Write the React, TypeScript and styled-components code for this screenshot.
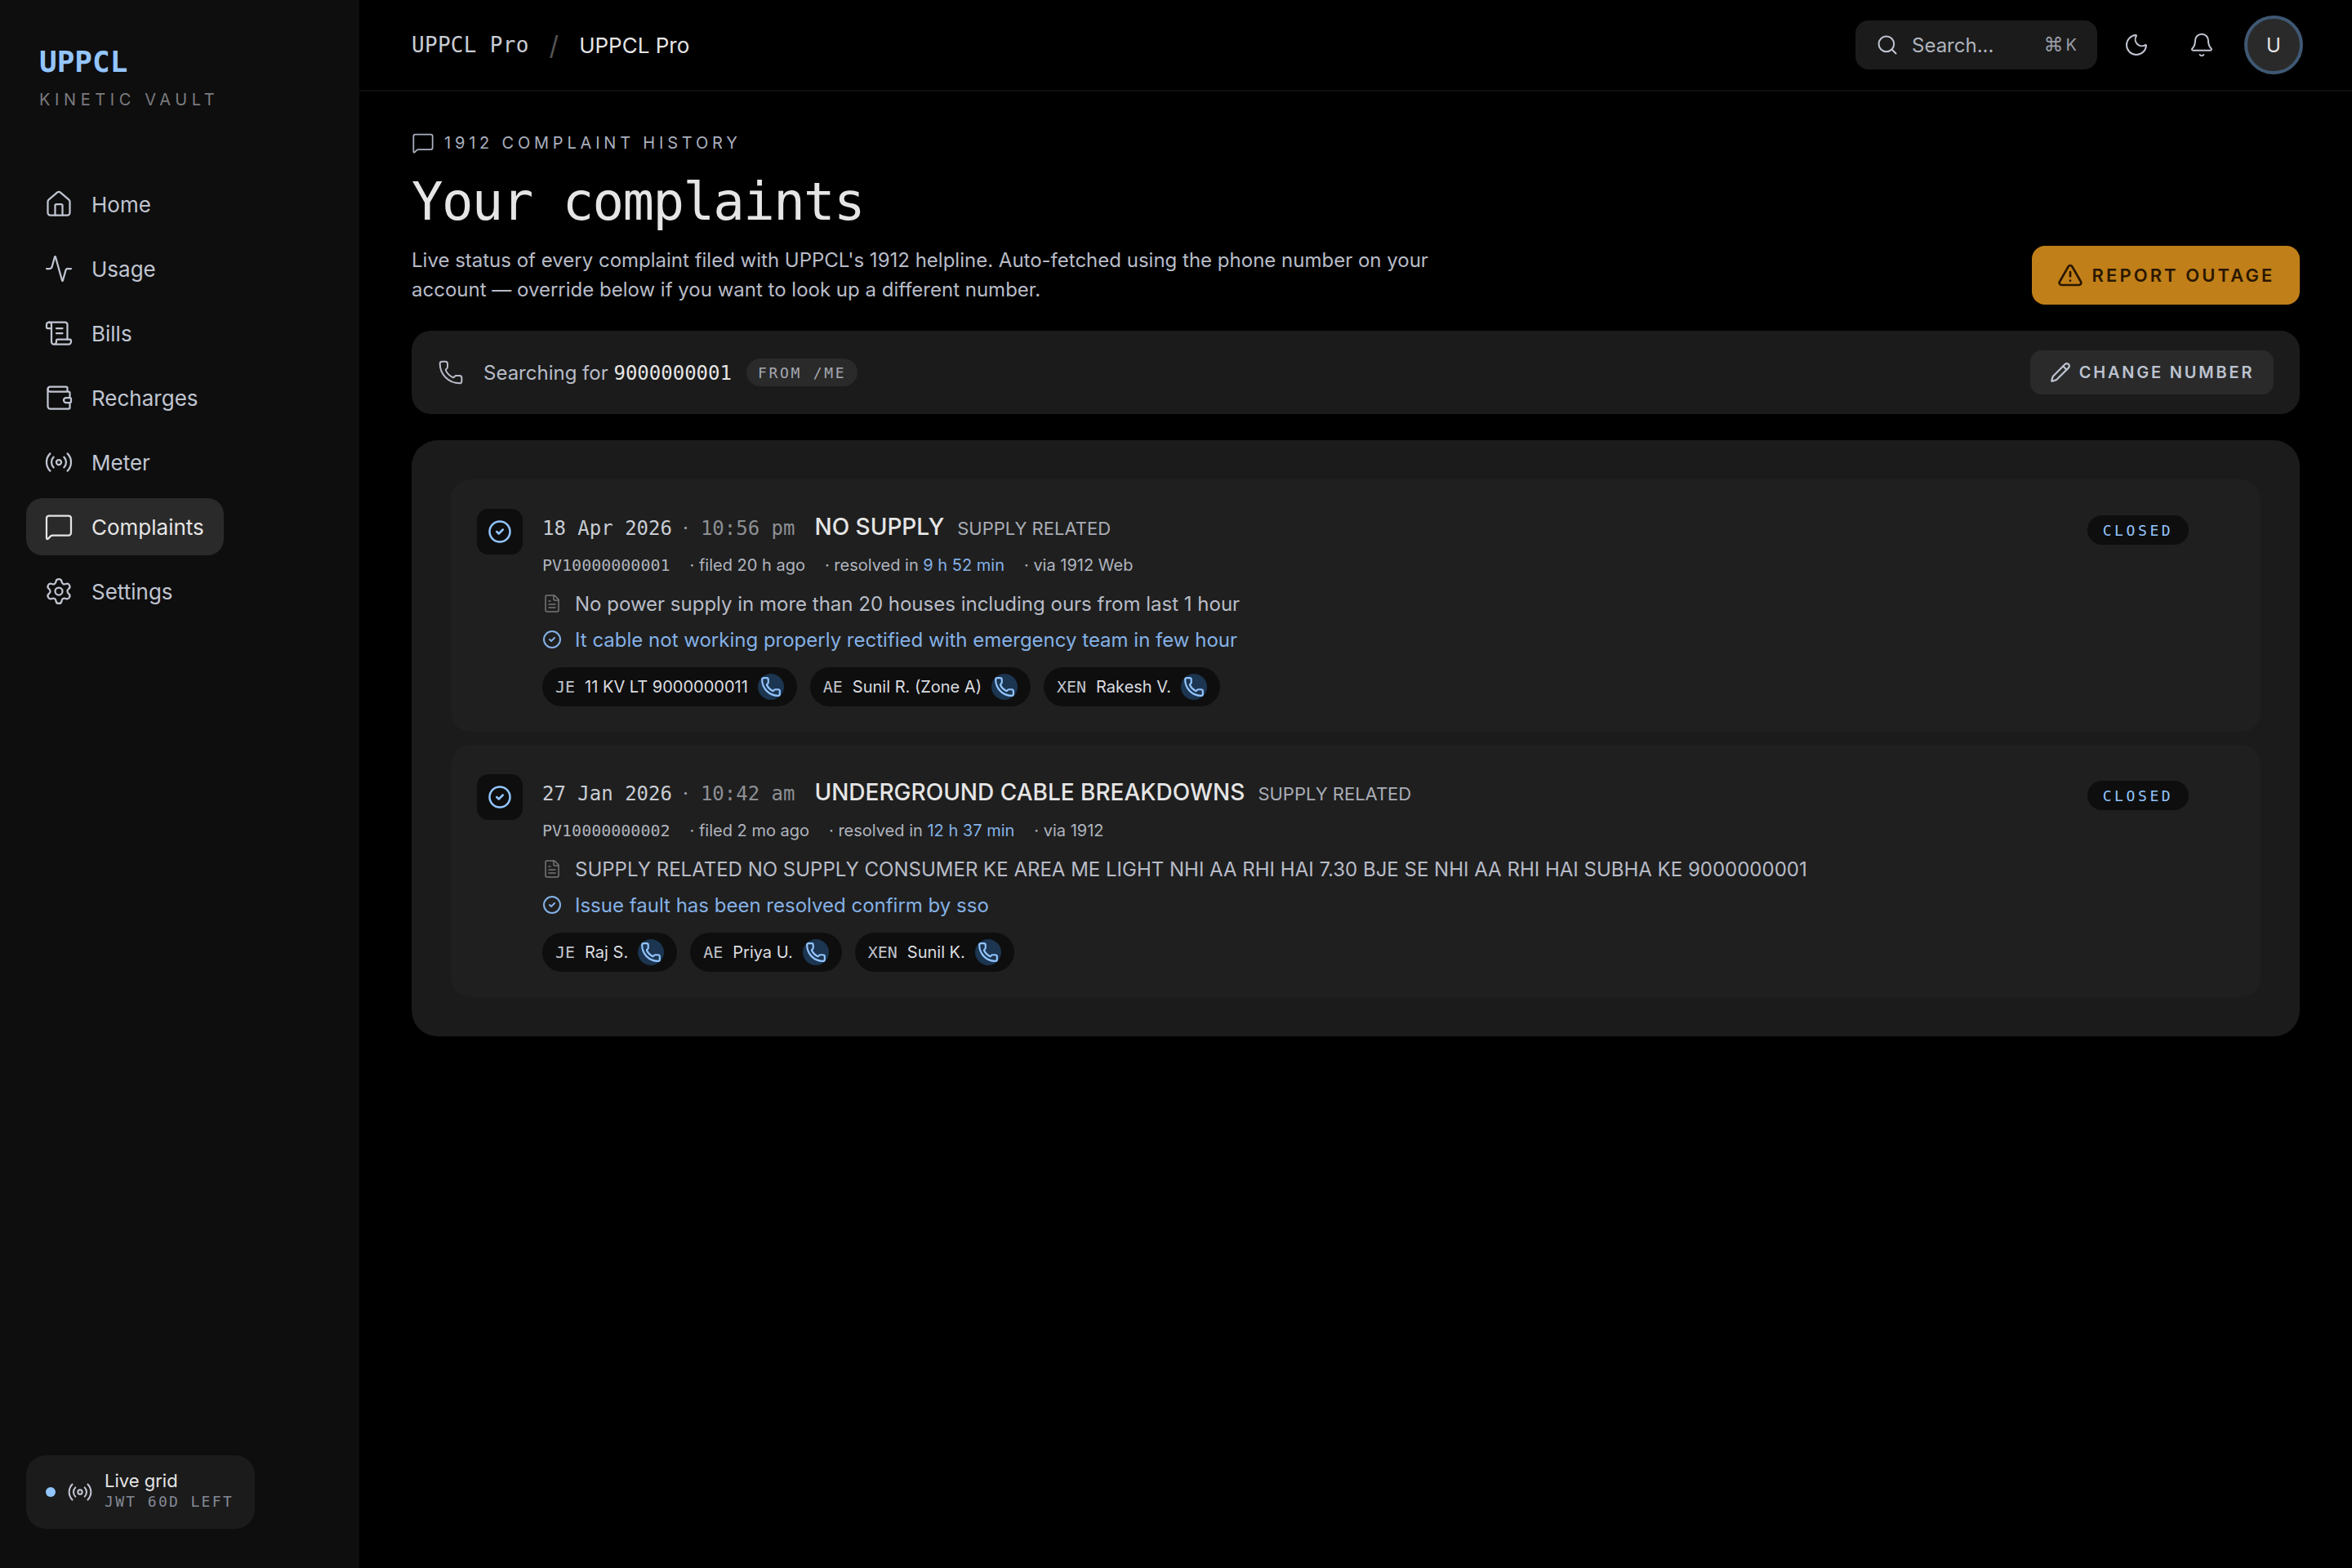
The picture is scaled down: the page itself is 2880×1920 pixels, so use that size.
import React from 'react';
import styled, { createGlobalStyle } from 'styled-components';
import {
	Activity,
	Bell,
	CircleCheck,
	FileText,
	House,
	MessageSquare,
	Moon,
	Pencil,
	Phone,
	Radio,
	ScrollText,
	Search,
	Settings,
	TriangleAlert,
	Wallet,
} from 'lucide-react';

const SANS = '"Inter", "Liberation Sans", sans-serif';
const MONO = '"DejaVu Sans Mono", "Liberation Mono", monospace';

const BLUE = '#93c5fd';
const SOFT_BLUE = '#84b1e6';

const GlobalStyle = createGlobalStyle`
	html, body {
		margin: 0;
		padding: 0;
		background: #000;
	}
	* {
		box-sizing: border-box;
	}
`;

const NAV_ITEMS = [
	{ label: 'Home', icon: House },
	{ label: 'Usage', icon: Activity },
	{ label: 'Bills', icon: ScrollText },
	{ label: 'Recharges', icon: Wallet },
	{ label: 'Meter', icon: Radio },
	{ label: 'Complaints', icon: MessageSquare, active: true },
	{ label: 'Settings', icon: Settings },
];

const COMPLAINTS = [
	{
		date: '18 Apr 2026',
		time: '10:56 pm',
		title: 'NO SUPPLY',
		category: 'SUPPLY RELATED',
		id: 'PV10000000001',
		filed: 'filed 20 h ago',
		resolved: '9 h 52 min',
		via: 'via 1912 Web',
		text: 'No power supply in more than 20 houses including ours from last 1 hour',
		resolution: 'It cable not working properly rectified with emergency team in few hour',
		contacts: [
			{ role: 'JE', name: '11 KV LT 9000000011' },
			{ role: 'AE', name: 'Sunil R. (Zone A)' },
			{ role: 'XEN', name: 'Rakesh V.' },
		],
	},
	{
		date: '27 Jan 2026',
		time: '10:42 am',
		title: 'UNDERGROUND CABLE BREAKDOWNS',
		category: 'SUPPLY RELATED',
		id: 'PV10000000002',
		filed: 'filed 2 mo ago',
		resolved: '12 h 37 min',
		via: 'via 1912',
		text: 'SUPPLY RELATED NO SUPPLY CONSUMER KE AREA ME LIGHT NHI AA RHI HAI 7.30 BJE SE NHI AA RHI HAI SUBHA KE 9000000001',
		resolution: 'Issue fault has been resolved confirm by sso',
		contacts: [
			{ role: 'JE', name: 'Raj S.' },
			{ role: 'AE', name: 'Priya U.' },
			{ role: 'XEN', name: 'Sunil K.' },
		],
	},
];

const App = () => {
	return (
		<Shell>
			<GlobalStyle />
			<Sidebar>
				<div>
					<Brand>
						<BrandName>UPPCL</BrandName>
						<BrandTag>Kinetic Vault</BrandTag>
					</Brand>
					<Nav>
						{NAV_ITEMS.map(({ label, icon: Icon, active }) => (
							<NavItem key={label} $active={!!active}>
								<Icon size={36} strokeWidth={1.5} />
								{label}
							</NavItem>
						))}
					</Nav>
				</div>
				<LiveCard>
					<LiveDot />
					<Radio size={32} strokeWidth={1.5} color="#c5cad5" />
					<LiveText>
						<LiveTitle>Live grid</LiveTitle>
						<LiveSub>JWT 60D LEFT</LiveSub>
					</LiveText>
				</LiveCard>
			</Sidebar>

			<Main>
				<TopBar>
					<Crumbs>
						<CrumbMono>UPPCL Pro</CrumbMono>
						<CrumbSlash>/</CrumbSlash>
						<CrumbPage>UPPCL Pro</CrumbPage>
					</Crumbs>
					<TopActions>
						<SearchBox>
							<Search size={28} strokeWidth={1.75} />
							<SearchText>Search...</SearchText>
							<Kbd>
								<KbdMark>⌘</KbdMark>K
							</Kbd>
						</SearchBox>
						<IconSlot>
							<Moon size={32} strokeWidth={1.5} />
						</IconSlot>
						<IconSlot>
							<Bell size={32} strokeWidth={1.5} />
						</IconSlot>
						<Avatar>U</Avatar>
					</TopActions>
				</TopBar>

				<Content>
					<PageHead>
						<div>
							<Eyebrow>
								<MessageSquare size={28} strokeWidth={1.5} />
								1912 Complaint History
							</Eyebrow>
							<PageTitle>Your complaints</PageTitle>
							<Lede>
								Live status of every complaint filed with UPPCL's 1912 helpline. Auto-fetched using the phone number on your account — override below if you want to look up a different number.
							</Lede>
						</div>
						<ReportButton>
							<TriangleAlert size={32} strokeWidth={2} />
							Report Outage
						</ReportButton>
					</PageHead>

					<SearchStrip>
						<StripLeft>
							<Phone size={32} strokeWidth={1.5} />
							<span>
								Searching for <StripNumber>9000000001</StripNumber>
							</span>
							<SourceChip>FROM /ME</SourceChip>
						</StripLeft>
						<ChangeButton>
							<Pencil size={26} strokeWidth={2} />
							Change Number
						</ChangeButton>
					</SearchStrip>

					<Panel>
						{COMPLAINTS.map((c) => (
							<Card key={c.id}>
								<StatusBox>
									<CircleCheck size={30} strokeWidth={2} />
								</StatusBox>
								<CardBody>
									<TitleRow>
										<DateText>{c.date}</DateText>
										<DateDot>·</DateDot>
										<TimeText>{c.time}</TimeText>
										<CardTitle>{c.title}</CardTitle>
										<Category>{c.category}</Category>
									</TitleRow>
									<MetaRow>
										<MetaId>{c.id}</MetaId>
										<span>· {c.filed}</span>
										<span>
											· resolved in <Blue>{c.resolved}</Blue>
										</span>
										<span>· {c.via}</span>
									</MetaRow>
									<TextLine>
										<FileText size={24} strokeWidth={1.5} color="#777" />
										{c.text}
									</TextLine>
									<TextLine $resolved>
										<CircleCheck size={24} strokeWidth={2} />
										{c.resolution}
									</TextLine>
									<Contacts>
										{c.contacts.map((p) => (
											<Contact key={p.role}>
												<Role>{p.role}</Role>
												<span>{p.name}</span>
												<CallDot>
													<Phone size={26} strokeWidth={2} />
												</CallDot>
											</Contact>
										))}
									</Contacts>
								</CardBody>
								<ClosedBadge>CLOSED</ClosedBadge>
							</Card>
						))}
					</Panel>
				</Content>
			</Main>
		</Shell>
	);
};

const Shell = styled.div`
	display: flex;
	width: 2880px;
	min-height: 1920px;
	background: #000;
	font-family: ${SANS};
	color: #e5e5e5;
`;

const Sidebar = styled.aside`
	flex: 0 0 440px;
	display: flex;
	flex-direction: column;
	justify-content: space-between;
	padding: 0 32px 48px;
	background: #0e0e0e;
`;

const Brand = styled.div`
	padding: 51px 16px 0;
`;

const BrandName = styled.div`
	font-family: ${MONO};
	font-size: 36px;
	line-height: 50px;
	font-weight: 700;
	color: ${BLUE};
`;

const BrandTag = styled.div`
	margin-top: 7px;
	font-size: 20px;
	line-height: 28px;
	letter-spacing: 0.28em;
	text-transform: uppercase;
	color: #7b7b7f;
`;

const Nav = styled.nav`
	display: flex;
	flex-direction: column;
	align-items: flex-start;
	gap: 9px;
	margin-top: 79px;
`;

const NavItem = styled.div<{ $active: boolean }>`
	display: flex;
	align-items: center;
	gap: 22px;
	height: 70px;
	padding: 0 24px 0 22px;
	border-radius: 20px;
	font-size: 26px;
	background: ${({ $active }) => ($active ? '#2a2a2a' : 'transparent')};
	color: ${({ $active }) => ($active ? '#e5e5e5' : '#c0c5d1')};
`;

const LiveCard = styled.div`
	display: flex;
	align-items: center;
	width: 280px;
	height: 90px;
	padding: 0 24px;
	border-radius: 24px;
	background: #1b1b1b;

	svg {
		flex: none;
		margin: 0 14px;
	}
`;

const LiveDot = styled.span`
	flex: none;
	width: 12px;
	height: 12px;
	border-radius: 50%;
	background: ${BLUE};
`;

const LiveText = styled.div`
	margin-bottom: 4px;
`;

const LiveTitle = styled.div`
	font-size: 22px;
	line-height: 28px;
	color: #e5e5e5;
`;

const LiveSub = styled.div`
	font-family: ${MONO};
	font-size: 18px;
	line-height: 24px;
	letter-spacing: 0.13em;
	color: #858a96;
	white-space: nowrap;
`;

const Main = styled.main`
	flex: 1;
	min-width: 0;
`;

const TopBar = styled.header`
	display: flex;
	align-items: center;
	justify-content: space-between;
	height: 112px;
	padding: 0 60px 0 64px;
	border-bottom: 2px solid #101010;
`;

const Crumbs = styled.div`
	display: flex;
	align-items: center;
	gap: 25px;
	font-size: 26px;
`;

const CrumbMono = styled.span`
	font-family: ${MONO};
	font-size: 26px;
	letter-spacing: 0.3px;
	color: #c8cbd3;
`;

const CrumbSlash = styled.span`
	color: #555;
	font-size: 32px;
`;

const CrumbPage = styled.span`
	color: #e5e5e5;
`;

const TopActions = styled.div`
	display: flex;
	align-items: center;
`;

const SearchBox = styled.div`
	display: flex;
	align-items: center;
	width: 296px;
	height: 60px;
	margin-right: 8px;
	padding: 0 25px 0 25px;
	border-radius: 16px;
	background: #1b1b1b;
	color: #c0c5d1;
`;

const SearchText = styled.span`
	margin-left: 16px;
	font-size: 24px;
	color: #b0b4be;
`;

const Kbd = styled.span`
	display: flex;
	align-items: center;
	gap: 3px;
	margin-left: auto;
	font-size: 20px;
	color: #9a9ea8;
`;

const KbdMark = styled.span`
	font-family: "DejaVu Sans", sans-serif;
	font-size: 24px;
`;

const IconSlot = styled.div`
	display: flex;
	align-items: center;
	justify-content: center;
	width: 80px;
	color: #c0c5d1;
`;

const Avatar = styled.div`
	display: flex;
	align-items: center;
	justify-content: center;
	width: 72px;
	height: 72px;
	margin-left: 12px;
	border: 4px solid #3f5873;
	border-radius: 50%;
	background: #2a2a2a;
	font-size: 24px;
	color: #e5e5e5;
`;

const Content = styled.div`
	padding: 49px 64px 0;
`;

const PageHead = styled.div`
	display: flex;
	align-items: flex-end;
	justify-content: space-between;
`;

const Eyebrow = styled.div`
	display: flex;
	align-items: center;
	gap: 12px;
	font-size: 20px;
	line-height: 28px;
	letter-spacing: 0.24em;
	text-transform: uppercase;
	color: #aab0bf;
`;

const PageTitle = styled.h1`
	margin: 16px 0 0;
	font-family: ${MONO};
	font-size: 64px;
	line-height: 84px;
	font-weight: 400;
	letter-spacing: -0.025em;
	color: #e5e5e5;
`;

const Lede = styled.p`
	max-width: 1280px;
	margin: 12px 0 0;
	font-size: 24px;
	line-height: 36px;
	color: #b8bcc8;
`;

const ReportButton = styled.button`
	display: flex;
	align-items: center;
	justify-content: center;
	gap: 11px;
	width: 328px;
	height: 72px;
	border: none;
	border-radius: 16px;
	background: #c07f18;
	color: #2a1700;
	font-family: ${SANS};
	font-size: 22px;
	font-weight: 600;
	letter-spacing: 0.14em;
	text-transform: uppercase;
`;

const SearchStrip = styled.section`
	display: flex;
	align-items: center;
	justify-content: space-between;
	height: 102px;
	margin-top: 32px;
	padding: 0 32px;
	border-radius: 24px;
	background: #1b1b1b;
`;

const StripLeft = styled.div`
	display: flex;
	align-items: center;
	font-size: 24px;
	color: #b8bcc8;

	> svg {
		margin-right: 24px;
	}
`;

const StripNumber = styled.span`
	font-family: ${MONO};
	color: #e5e5e5;
`;

const SourceChip = styled.span`
	display: flex;
	align-items: center;
	height: 34px;
	margin-left: 18px;
	padding: 0 14px;
	border-radius: 17px;
	background: #2a2a2a;
	font-family: ${MONO};
	font-size: 18px;
	letter-spacing: 0.15em;
	color: #a6a9b2;
`;

const ChangeButton = styled.button`
	display: flex;
	align-items: center;
	justify-content: center;
	gap: 10px;
	width: 298px;
	height: 54px;
	border: none;
	border-radius: 14px;
	background: #2a2a2a;
	color: #bcc2d0;
	font-family: ${SANS};
	font-size: 20px;
	font-weight: 600;
	letter-spacing: 0.14em;
	text-transform: uppercase;
`;

const Panel = styled.section`
	display: flex;
	flex-direction: column;
	gap: 16px;
	margin-top: 32px;
	padding: 48px;
	border-radius: 32px;
	background: #1b1b1b;
`;

const Card = styled.article`
	display: flex;
	align-items: flex-start;
	padding: 36px 88px 31px 32px;
	border-radius: 24px;
	background: #1f1f1f;
`;

const StatusBox = styled.div`
	display: flex;
	align-items: center;
	justify-content: center;
	flex: none;
	width: 56px;
	height: 56px;
	border-radius: 14px;
	background: #0e0e0e;
	color: ${BLUE};
`;

const CardBody = styled.div`
	flex: 1;
	min-width: 0;
	margin-left: 24px;
`;

const TitleRow = styled.div`
	display: flex;
	align-items: baseline;
	height: 46px;
	margin-top: 5px;
`;

const DateText = styled.span`
	font-family: ${MONO};
	font-size: 24px;
	color: #c8ccd4;
`;

const DateDot = styled.span`
	margin: 0 15px 0 13px;
	font-size: 24px;
	color: #9a9ea8;
`;

const TimeText = styled.span`
	font-family: ${MONO};
	font-size: 24px;
	color: #8d8f94;
`;

const CardTitle = styled.span`
	margin-left: 24px;
	font-size: 28px;
	font-weight: 500;
	color: #e5e5e5;
`;

const Category = styled.span`
	margin-left: 16px;
	font-size: 22px;
	color: #a9adb6;
`;

const MetaRow = styled.div`
	display: flex;
	align-items: baseline;
	gap: 24px;
	height: 30px;
	margin-top: 6px;
	font-size: 20px;
	color: #b0b4be;
`;

const MetaId = styled.span`
	font-family: ${MONO};
	font-size: 20px;
`;

const Blue = styled.span`
	color: ${SOFT_BLUE};
`;

const TextLine = styled.div<{ $resolved?: boolean }>`
	display: flex;
	align-items: center;
	gap: 16px;
	height: 44px;
	margin-top: ${({ $resolved }) => ($resolved ? '0' : '7px')};
	font-size: 24px;
	color: ${({ $resolved }) => ($resolved ? SOFT_BLUE : '#b8bcc8')};
`;

const Contacts = styled.div`
	display: flex;
	gap: 16px;
	margin-top: 12px;
`;

const Contact = styled.div`
	display: flex;
	align-items: center;
	gap: 12px;
	height: 48px;
	padding: 0 16px;
	border-radius: 24px;
	background: #0e0e0e;
	font-size: 20px;
	color: #dcdde0;
`;

const Role = styled.span`
	font-family: ${MONO};
	font-size: 20px;
	color: #c0c3cb;
`;

const CallDot = styled.span`
	display: flex;
	align-items: center;
	justify-content: center;
	width: 32px;
	height: 32px;
	border-radius: 50%;
	background: #1c3550;
	color: ${BLUE};
`;

const ClosedBadge = styled.span`
	flex: none;
	display: flex;
	align-items: center;
	justify-content: center;
	width: 124px;
	height: 36px;
	margin-top: 8px;
	border-radius: 18px;
	background: #0e0e0e;
	font-family: ${MONO};
	font-size: 18px;
	letter-spacing: 0.2em;
	color: ${BLUE};
`;

export default App;
